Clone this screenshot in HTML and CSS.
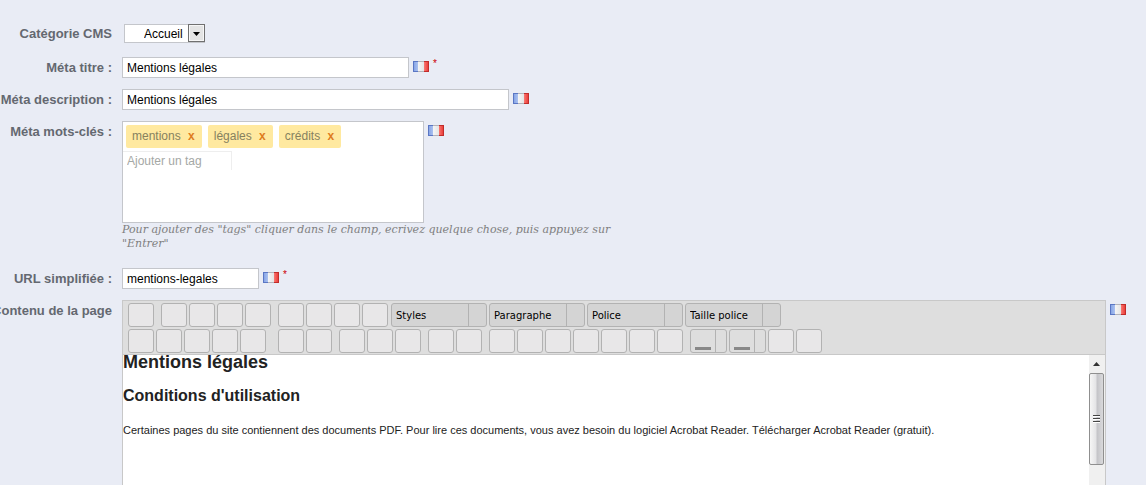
FILE: index.html
```html
<!DOCTYPE html>
<html lang="fr">

<head>
  <meta charset="utf-8">
  <meta name="viewport" content="width=device-width, initial-scale=1">
  <title>CMS</title>
  <link rel="stylesheet" href="styles.css">
</head>

<body>
  <svg class="defs" aria-hidden="true">
    <defs>
      <linearGradient id="blue" x1="0" x2="1"><stop offset="0" stop-color="#7f9fe4"/><stop offset="1" stop-color="#b4c8f2"/></linearGradient>
      <linearGradient id="white" x1="0" x2="1"><stop offset="0" stop-color="#f6f6f6"/><stop offset="1" stop-color="#e4e4e4"/></linearGradient>
      <linearGradient id="red" x1="0" x2="1"><stop offset="0" stop-color="#f87872"/><stop offset="1" stop-color="#e8302c"/></linearGradient>
      <symbol id="flag" viewBox="0 0 16 11">
        <rect width="6" height="11" fill="url(#blue)"/>
        <rect x="5" width="6" height="11" fill="url(#white)"/>
        <rect x="11" width="5" height="11" fill="url(#red)"/>
        <path d="M0 .5h5M.5 0v11M0 10.5h5" stroke="#5a76c4" fill="none"/>
        <path d="M5 .5h6M5 10.5h6" stroke="#b4b4ba" fill="none"/>
        <path d="M11 .5h5M15.5 0v11M11 10.5h5" stroke="#c02c2a" fill="none"/>
      </symbol>
    </defs>
  </svg>

  <form>
    <div class="row first">
      <label for="category">Catégorie CMS</label>
      <div class="select">
        <select id="category"><option>Accueil</option></select>
        <svg class="arrow" width="17" height="18" viewBox="0 0 17 18" aria-hidden="true">
          <rect x=".5" y=".5" width="16" height="17" fill="#e4e4e4" stroke="#707070"/>
          <rect x="1.5" y="1.5" width="14" height="15" fill="none" stroke="#f6f6f6"/>
          <path d="M5 8h7l-3.500 4z" fill="#000"/>
        </svg>
      </div>
    </div>

    <div class="row">
      <label for="title">Méta titre :</label>
      <input type="text" id="title" class="text medium" value="Mentions légales">
      <svg class="flag"><use href="#flag"/></svg>
      <sup>*</sup>
    </div>

    <div class="row">
      <label for="description">Méta description :</label>
      <input type="text" id="description" class="text large" value="Mentions légales">
      <svg class="flag"><use href="#flag"/></svg>
    </div>

    <div class="row">
      <label for="tag">Méta mots-clés :</label>
      <div class="field">
        <div class="line">
          <div class="tagbox">
            <div class="tags">
              <span class="tag">mentions <a href="#">x</a></span>
              <span class="tag">légales <a href="#">x</a></span>
              <span class="tag">crédits <a href="#">x</a></span>
            </div>
            <input type="text" id="tag" placeholder="Ajouter un tag">
          </div>
          <svg class="flag"><use href="#flag"/></svg>
        </div>
        <p class="hint">Pour ajouter des "tags" cliquer dans le champ, ecrivez quelque chose, puis appuyez sur "Entrer"</p>
      </div>
    </div>

    <div class="row url">
      <label for="url">URL simplifiée :</label>
      <input type="text" id="url" class="text small" value="mentions-legales">
      <svg class="flag"><use href="#flag"/></svg>
      <sup>*</sup>
    </div>

    <div class="row content">
      <span class="label">Contenu de la page</span>
      <div class="editor">
        <div class="toolbar">
          <div class="bar">
            <button type="button" aria-label="HTML"></button>
            <button type="button" class="sep" aria-label="Gras"></button>
            <button type="button" aria-label="Italique"></button>
            <button type="button" aria-label="Souligné"></button>
            <button type="button" aria-label="Barré"></button>
            <button type="button" class="sep" aria-label="Gauche"></button>
            <button type="button" aria-label="Centré"></button>
            <button type="button" aria-label="Droite"></button>
            <button type="button" aria-label="Justifié"></button>
            <div class="lists">
              <div class="list"><select aria-label="Styles"><option>Styles</option></select></div>
              <div class="list"><select aria-label="Paragraphe"><option>Paragraphe</option></select></div>
              <div class="list"><select aria-label="Police"><option>Police</option></select></div>
              <div class="list"><select aria-label="Taille police"><option>Taille police</option></select></div>
            </div>
          </div>
          <div class="bar">
            <button type="button" aria-label="Couper"></button>
            <button type="button" aria-label="Copier"></button>
            <button type="button" aria-label="Coller"></button>
            <button type="button" aria-label="Coller le texte"></button>
            <button type="button" aria-label="Coller depuis Word"></button>
            <button type="button" class="sep wide" aria-label="Rechercher"></button>
            <button type="button" aria-label="Remplacer"></button>
            <button type="button" class="sep" aria-label="Puces"></button>
            <button type="button" aria-label="Numéros"></button>
            <button type="button" aria-label="Citation"></button>
            <button type="button" class="sep" aria-label="Annuler"></button>
            <button type="button" aria-label="Rétablir"></button>
            <button type="button" class="sep" aria-label="Lien"></button>
            <button type="button" aria-label="Supprimer le lien"></button>
            <button type="button" aria-label="Ancre"></button>
            <button type="button" aria-label="Image"></button>
            <button type="button" aria-label="Nettoyer"></button>
            <button type="button" aria-label="Code"></button>
            <button type="button" aria-label="Date"></button>
            <button type="button" class="color sep" aria-label="Couleur du texte"></button>
            <button type="button" class="color" aria-label="Couleur du fond"></button>
            <button type="button" aria-label="Plein écran"></button>
            <button type="button" aria-label="Aide"></button>
          </div>
        </div>
        <div class="page">
          <div class="text-content">
            <h1>Mentions légales</h1>
            <h2>Conditions d'utilisation</h2>
            <p>Certaines pages du site contiennent des documents PDF. Pour lire ces documents, vous avez besoin du logiciel Acrobat Reader. Télécharger Acrobat Reader (gratuit).</p>
          </div>
          <div class="scrollbar">
            <svg width="15" height="18" viewBox="0 0 15 18" aria-hidden="true"><path d="M4 11h7L7.500 7z" fill="#333"/></svg>
            <div class="thumb">
              <svg width="7" height="8" viewBox="0 0 7 8" aria-hidden="true"><path d="M0 .5h7M0 3.500h7M0 6.500h7" stroke="#444"/><path d="M0 1.500h7M0 4.500h7M0 7.500h7" stroke="#fff"/></svg>
            </div>
          </div>
        </div>
      </div>
      <svg class="flag"><use href="#flag"/></svg>
    </div>
  </form>
</body>

</html>
```
FILE: styles.css
```css
* {
  box-sizing: border-box;
}

body {
  margin: 0;
  background: #e9ecf5;
  color: #000;
  font: 12px "Liberation Sans", Arial, sans-serif;
  overflow-x: hidden;
}

input, select, button {
  margin: 0;
  padding: 0;
  font: inherit;
  color: inherit;
  appearance: none;
}

.defs {
  position: absolute;
  width: 0;
  height: 0;
}

form {
  display: flex;
  flex-direction: column;
  gap: 11px;
  min-height: 100vh;
  padding-top: 23px;
}

.row, .line {
  display: flex;
  align-items: flex-start;
}

.row {
  min-height: 21px;
}

.first {
  align-items: center;
  margin-bottom: 2px;
}

.url {
  margin-top: 6px;
}

label, .label {
  display: flex;
  flex: none;
  justify-content: flex-end;
  width: 112px;
  margin-right: 10px;
  line-height: 21px;
  font-size: 13px;
  font-weight: bold;
  color: #646870;
  white-space: nowrap;
}

.text {
  height: 21px;
  padding: 0 4px;
  border: 1px solid #c4c6cb;
  background: #fff;
}

.small {
  width: 137px;
}

.medium {
  width: 287px;
}

.large {
  width: 387px;
}

.flag {
  flex: none;
  width: 16px;
  height: 11px;
  margin: 4px 4px 0;
}

sup {
  line-height: 14px;
  color: #c00;
  vertical-align: top;
}

.select {
  position: relative;
  margin-left: 2px;
}

.select select {
  display: block;
  width: 81px;
  height: 19px;
  padding-left: 19px;
  border: 1px solid #c4c6cb;
  border-radius: 0;
  background: #fff;
}

.arrow {
  position: absolute;
  top: 0;
  right: 0;
  pointer-events: none;
}

.tagbox {
  width: 302px;
  height: 102px;
  border: 1px solid #c4c6cb;
  background: #fff;
}

.tags {
  display: flex;
  gap: 6px;
  padding: 3px;
}

.tag {
  padding: 0 7px 0 6px;
  border-radius: 2px;
  background: #ffe9a0;
  color: #86815f;
  line-height: 23px;
}

.tag a {
  margin-left: 4px;
  color: #de7c20;
  font-weight: bold;
  text-decoration: none;
}

.tagbox input {
  display: block;
  width: 109px;
  height: 19px;
  padding: 0 4px;
  border: solid #eee;
  border-width: 1px 1px 0 0;
  background: #fff;
}

.tagbox input::placeholder {
  color: #a5a8a5;
}

.hint {
  max-width: 500px;
  margin: 0;
  line-height: 14px;
  font-family: "DejaVu Serif", Georgia, serif;
  font-size: 11px;
  font-style: italic;
  color: #7f7f7f;
}

.content {
  flex: 1;
  align-items: stretch;
  padding-right: 16px;
}

.editor {
  display: flex;
  flex: 1;
  flex-direction: column;
  min-width: 0;
  border: solid #c8c8c8;
  border-width: 1px 1px 0;
}

.toolbar {
  display: flex;
  flex-direction: column;
  gap: 2px;
  padding: 2px 5px 1px;
  border-bottom: 1px solid #c8c8c8;
  background: #dedede;
}

.bar, .lists {
  display: flex;
  gap: 2px;
}

.lists {
  margin-left: 1px;
}

.bar button {
  width: 26px;
  height: 24px;
  border: 1px solid #b2b2b2;
  border-radius: 3px;
  background: #e8e7e8;
}

.bar .sep {
  margin-left: 5px;
}

.bar .wide {
  margin-left: 10px;
}

.list {
  display: flex;
  width: 96px;
  height: 24px;
  border: 1px solid #b2b2b2;
  border-radius: 3px;
  background: #d4d4d4;
}

.list select {
  flex: 1;
  padding-left: 4px;
  border: 0;
  background: none;
  font-family: "DejaVu Sans", Tahoma, sans-serif;
  font-size: 10px;
}

.list::after {
  content: "";
  width: 17px;
  border-left: 1px solid #b2b2b2;
}

.bar .color {
  display: flex;
  align-items: stretch;
  width: 37px;
  background: #dedede;
}

.color::before {
  content: "";
  align-self: flex-end;
  width: 16px;
  height: 3px;
  margin: 0 4px 2px;
  background: #888;
}

.color::after {
  content: "";
  flex: 1;
  border-left: 1px solid #b2b2b2;
}

.page {
  display: flex;
  flex: 1;
  background: #fff;
}

.text-content {
  flex: 1;
  color: #222;
  font-size: 11px;
}

.text-content h1 {
  margin: 0;
  line-height: 14px;
  font-size: 18px;
}

.text-content h2 {
  margin: 17px 0 16px;
  line-height: 20px;
  font-size: 16px;
}

.text-content p {
  margin: 0;
  line-height: 16px;
}

.scrollbar {
  width: 16px;
  padding-right: 1px;
  background: #f0f0f0;
}

.scrollbar svg {
  display: block;
}

.thumb {
  display: flex;
  align-items: center;
  justify-content: center;
  height: 92px;
  border: 1px solid #8f8f8f;
  border-radius: 2px;
  background: linear-gradient(to right, #f6f6f6, #e4e4e6 45%, #c4c4c8 55%, #dadadc);
}
```
